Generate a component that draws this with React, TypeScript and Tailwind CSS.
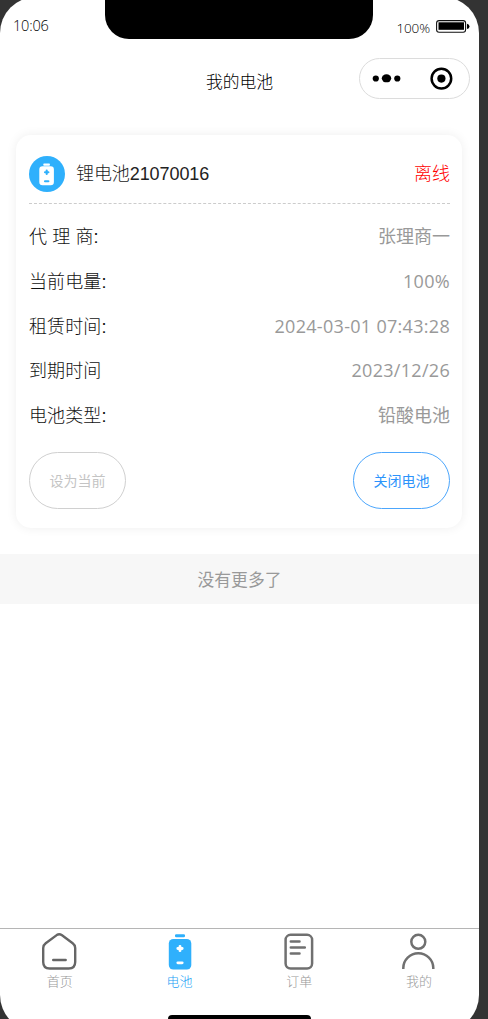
import { ReactNode } from 'react';
import clsx from 'clsx';

interface Field {
  label: string;
  value: string;
  numeric?: boolean;
}

interface Tab {
  key: string;
  label: string;
  icon: ReactNode;
}

const fields: Field[] = [
  { label: '代 理 商:', value: '张理商一' },
  { label: '当前电量:', value: '100%', numeric: true },
  { label: '租赁时间:', value: '2024-03-01 07:43:28', numeric: true },
  { label: '到期时间', value: '2023/12/26', numeric: true },
  { label: '电池类型:', value: '铅酸电池' },
];

const HomeIcon = () => (
  <svg width="36" height="38" viewBox="0.8 0 36 38" fill="none" stroke="#666" strokeWidth="2.4" strokeLinecap="round">
    <path d="M15.5 3.1 4.5 11.2Q2 13 2 16V30q0 6.5 6.5 6.5h19q6.500 0 6.500-6.500V16q0-3-2.500-4.800L20.500 3.100q-2.500-1.600-5 0Z" />
    <path d="M12 28h12.500" />
  </svg>
);

const BatteryIcon = () => (
  <svg width="36" height="38" viewBox="0 0 36 38" fill="none">
    <rect x="13" y="2.300" width="10" height="3" rx="1.200" fill="#2fb0fc" />
    <rect x="6.800" y="7" width="22.500" height="30.500" rx="4.500" fill="#2fb0fc" />
    <path d="M18 14.300v4.400M15.800 16.500h4.400" stroke="#fff" strokeWidth="2.800" strokeLinecap="round" />
    <path d="M15.800 30.800h4.400" stroke="#fff" strokeWidth="2.800" strokeLinecap="round" />
  </svg>
);

const OrderIcon = () => (
  <svg width="36" height="38" viewBox="0 0 36 38" fill="none" stroke="#707070" strokeWidth="2.500" strokeLinecap="round">
    <rect x="4.600" y="2.800" width="26.500" height="33.700" rx="5" />
    <path d="M9.800 9.500h8.700M9.800 15.500h14M9.800 21.500h8.700" />
  </svg>
);

const UserIcon = () => (
  <svg width="36" height="38" viewBox="0.7 0 36 38" fill="none" stroke="#707070" strokeWidth="2.500">
    <circle cx="18" cy="9.800" r="7" />
    <path d="M3 37v-1a15 14.800 0 0 1 30 0v1" />
  </svg>
);

const tabs: Tab[] = [
  { key: 'home', label: '首页', icon: <HomeIcon /> },
  { key: 'battery', label: '电池', icon: <BatteryIcon /> },
  { key: 'order', label: '订单', icon: <OrderIcon /> },
  { key: 'mine', label: '我的', icon: <UserIcon /> },
];

const StatusBar = () => (
  <div className="flex h-[43px] pl-[13px] pr-[9px] pt-[3px] font-['Open_Sans',sans-serif] text-black">
    <span className="mt-4 w-[92px] shrink-0 text-[14.500px] font-light leading-5 tracking-[-0.200px]">10:06</span>
    <div className="h-[39px] w-[268px] shrink-0 rounded-b-[24px] bg-black" />
    <div className="ml-auto mt-[18px] flex h-5 justify-end">
      <span className="mr-1.5 text-[13.500px] font-light leading-5 tracking-[-0.100px]">100%</span>
      <svg className="mt-0.5" width="34" height="13" viewBox="0 0 34 13">
        <rect x="0.600" y="0.600" width="29" height="11.600" rx="2.500" fill="#fff" stroke="#111" strokeWidth="1.100" />
        <rect x="2.500" y="2.300" width="25.500" height="7.500" fill="#000" />
        <path d="M31 3.800q2.500.500 2.500 2.600T31 9Z" fill="#000" />
      </svg>
    </div>
  </div>
);

const Header = () => (
  <header className="grid h-[68px] grid-cols-[1fr_auto_1fr] items-center pr-[9px]">
    <span />
    <h1 className="mt-[17px] pl-[9px] text-[16.800px] font-light leading-6 text-black">我的电池</h1>
    <div className="mt-2 flex h-[41px] w-[111px] items-center justify-self-end rounded-full border border-[#dcdcdc]">
      <svg width="109" height="39" viewBox="0 0 109 39">
        <circle cx="15.800" cy="19.500" r="3.100" />
        <ellipse cx="26.500" cy="19.300" rx="4.700" ry="4" />
        <circle cx="37.300" cy="19.500" r="3.100" />
        <circle cx="81.400" cy="19.600" r="9.800" fill="none" stroke="#000" strokeWidth="2.500" />
        <circle cx="81.400" cy="19.600" r="4.100" />
      </svg>
    </div>
  </header>
);

const BatteryCard = () => (
  <section className="ml-4 mr-[17px] mt-[27px] h-[393px] rounded-[15px] pl-[13px] pr-3 pt-[21px] shadow-[0_0_11px_rgba(0,0,0,0.070)]">
    <div className="flex h-12 items-start justify-between border-b border-dashed border-[#ccc]">
      <div className="flex items-center">
        <svg width="36" height="36" viewBox="0 0 36 36">
          <circle cx="18" cy="18" r="18" fill="#2fb0fc" />
          <rect x="14.300" y="7.500" width="6.600" height="2.200" rx="0.700" fill="#fff" />
          <rect x="10.300" y="10.200" width="14.600" height="19" rx="3.200" fill="#fff" />
          <path d="M17.700 14.600v3.400M16 16.300H19.400M16 25.200h3.400" stroke="#2fb0fc" strokeWidth="2.100" strokeLinecap="round" />
        </svg>
        <span className="ml-[11px] text-[18px] font-light leading-9 tracking-[-0.080px] text-[#222]">锂电池21070016</span>
      </div>
      <span className="text-[18px] font-light leading-9 text-[#ff0000]">离线</span>
    </div>
    <dl className="pt-[11px]">
      {fields.map((field) => (
        <div key={field.label} className="flex h-[44.700px] items-center justify-between text-[18px] leading-6">
          <dt className="font-light tracking-[0.100px] text-[#111]">{field.label}</dt>
          <dd
            className={clsx(
              "-mt-0.5 font-['Open_Sans','Noto_Sans_CJK_SC',sans-serif] text-[#999]",
              field.numeric && 'tracking-[0.300px]'
            )}
          >
            {field.value}
          </dd>
        </div>
      ))}
    </dl>
    <div className="mt-3.5 flex justify-between text-[14px]">
      <button className="h-[57px] w-[97px] rounded-full border border-[#d0d0d0] pt-0.5 text-[#c4c4c4]">设为当前</button>
      <button className="h-[57px] w-[97px] rounded-full border border-[#4ca6fc] pt-0.5 text-[#2c93fb]">关闭电池</button>
    </div>
  </section>
);

const TabBar = ({ active }: { active: string }) => (
  <nav className="mt-auto grid h-[103px] grid-cols-4 border-t border-[#b5b5b5] pt-[3px]">
    {tabs.map((tab) => (
      <div key={tab.key} className="flex flex-col items-center">
        {tab.icon}
        <span
          className={clsx(
            'mt-0.5 text-[13px] font-light leading-5',
            tab.key === active ? 'text-[#1a9ff5]' : 'text-[#999]'
          )}
        >
          {tab.label}
        </span>
      </div>
    ))}
  </nav>
);

const App = () => {
  return (
    <div className="relative h-[1019px] w-[488px] overflow-hidden bg-[#333] font-['Liberation_Sans','Noto_Sans_CJK_SC',sans-serif]">
      <main className="-mt-[3px] flex h-[1034px] w-[479px] flex-col overflow-hidden rounded-[36px] bg-white">
        <StatusBar />
        <Header />
        <BatteryCard />
        <div className="mt-[26px] h-[50px] bg-[#f7f7f7] text-center text-[16.800px] leading-[53px] text-[#999]">没有更多了</div>
        <TabBar active="battery" />
      </main>
      {/* home indicator */}
      <div className="absolute bottom-0 left-[168px] h-1 w-[143px] rounded-t-sm bg-black" />
    </div>
  );
};

export default App;
